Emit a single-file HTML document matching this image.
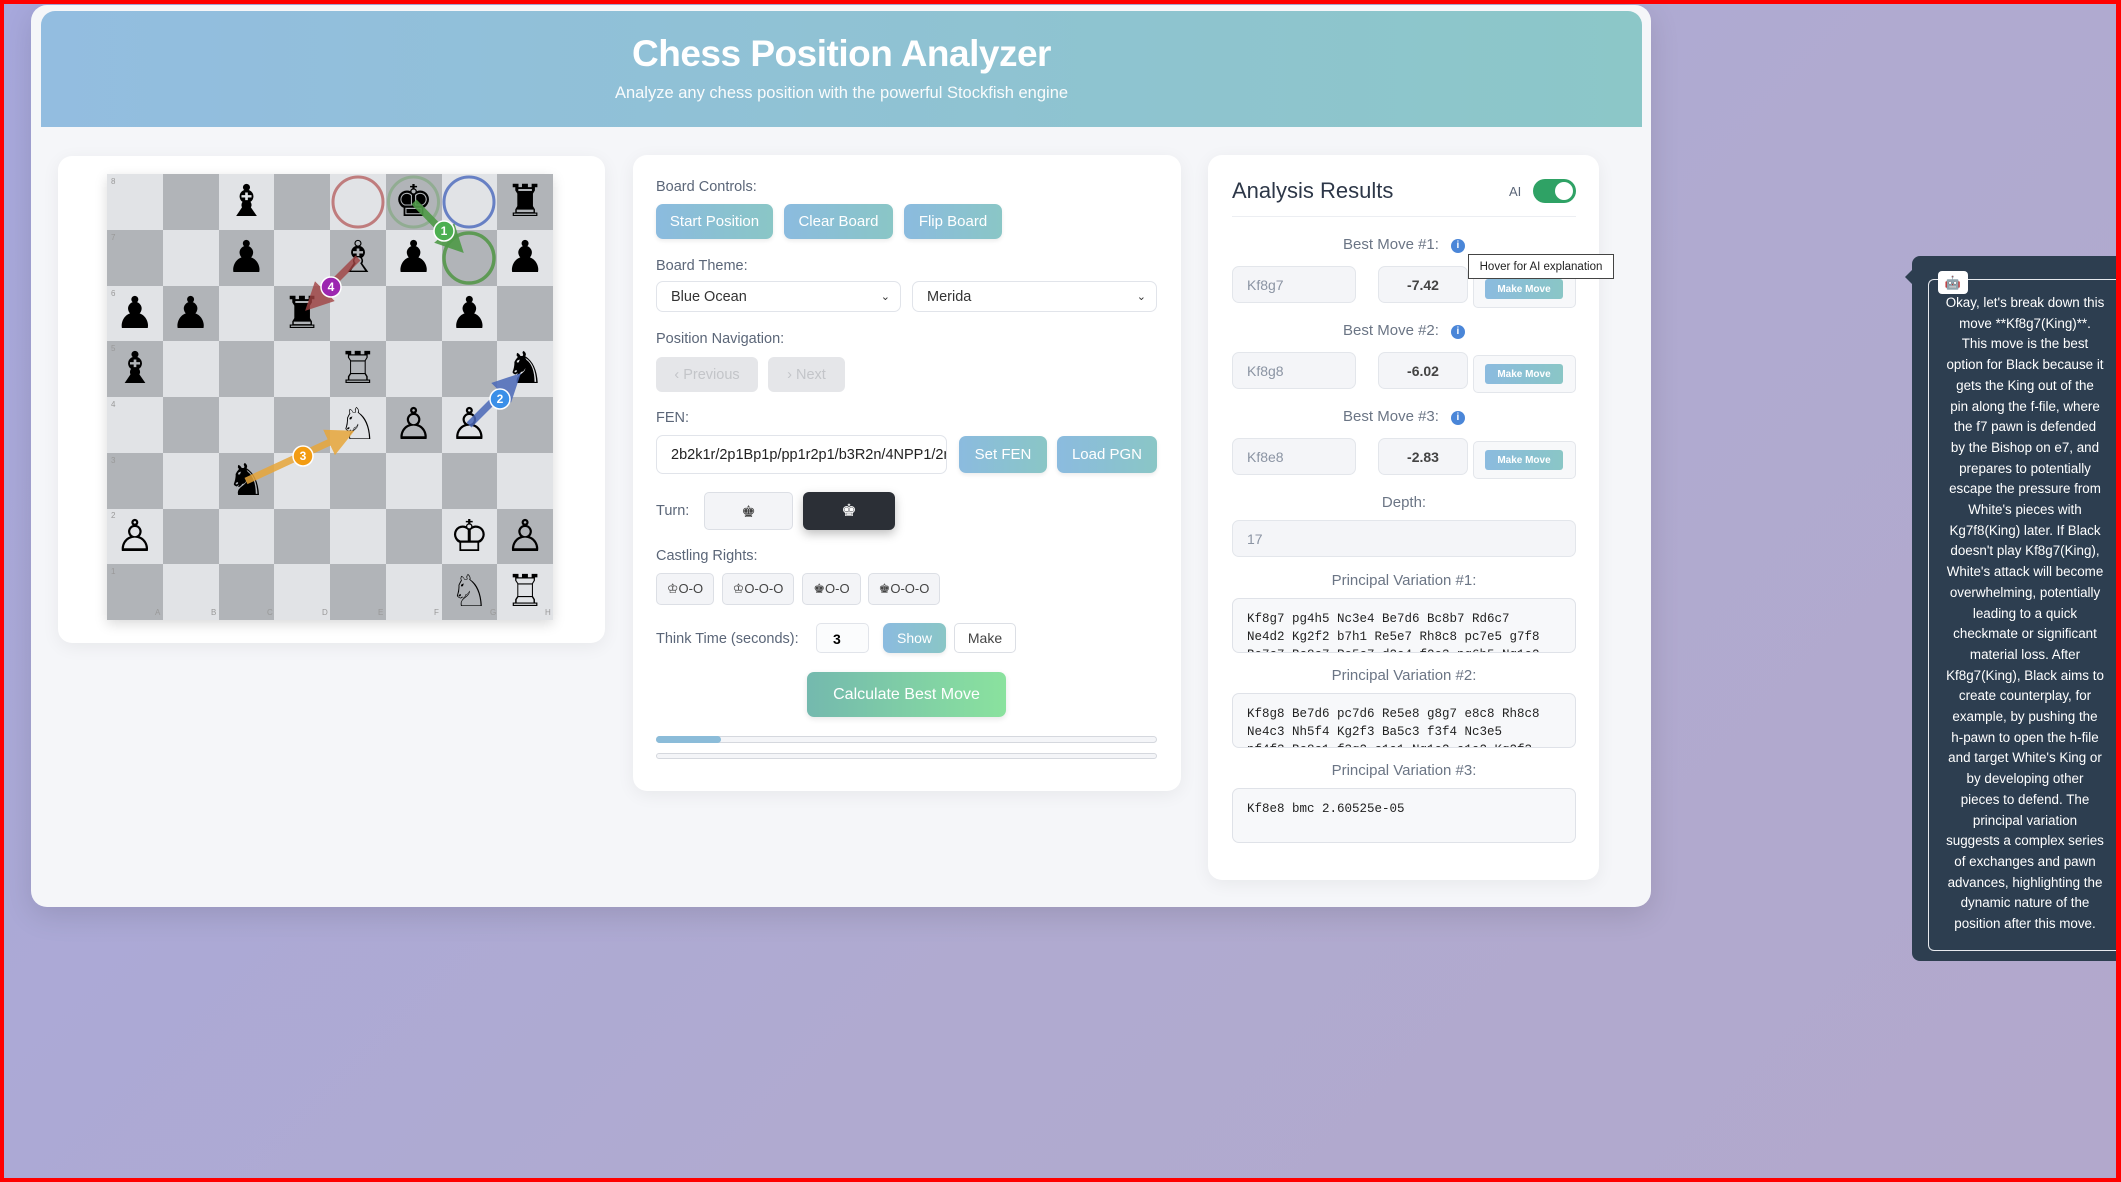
<!DOCTYPE html>
<html><head><meta charset="utf-8">
<style>
*{box-sizing:border-box;margin:0;padding:0}
html,body{width:2121px;height:1182px;overflow:hidden}
body{position:relative;background:linear-gradient(135deg,#a7a8dc 0%,#b0aad0 60%,#b2a8cc 100%);font-family:"Liberation Sans",sans-serif}
.frame{position:absolute;left:0;top:0;width:2121px;height:1182px;border:4px solid #f00;border-right-width:5px;pointer-events:none;z-index:10}
.a{position:absolute}
.main{left:31px;top:5px;width:1620px;height:902px;background:#f5f6f9;border-radius:16px;box-shadow:0 8px 30px rgba(0,0,0,.12)}
.hdr{left:41px;top:11px;width:1601px;height:116px;background:linear-gradient(90deg,#93bde0,#8cc7c8);border-radius:14px 14px 0 0;color:#fff;text-align:center}
.card{background:#fff;border-radius:14px;box-shadow:0 4px 18px rgba(0,0,0,.06)}
.lbl{color:#5b6678;font-size:14.5px}
.btn{background:linear-gradient(90deg,#8bbbdf,#8ac6c6);color:#fff;border-radius:7px;font-size:15px;display:flex;align-items:center;justify-content:center;box-shadow:0 2px 4px rgba(0,0,0,.08)}
.inp{border:1px solid #e1e4ea;border-radius:7px;background:#fff;font-size:14.5px;display:flex;align-items:center;padding-left:14px;color:#333}
.gb{background:#f3f4f7;border:1px solid #dcdfe5;border-radius:5px;display:flex;align-items:center;justify-content:center;font-size:13px;color:#444}
.sq{position:absolute;width:55.75px;height:55.75px}
.pc{position:absolute;width:55.75px;height:55.75px;font-family:"DejaVu Sans",sans-serif;font-size:44px;line-height:55px;text-align:center;color:#000}
.rk{position:absolute;font-size:8px;color:#999}
.ro{background:#f4f5f8;border:1px solid #e3e6eb;border-radius:7px;font-size:14px;color:#8b94a3;display:flex;align-items:center;padding-left:14px}
.sc{background:#f4f5f8;border:1px solid #e3e6eb;border-radius:7px;font-size:14px;color:#444;font-weight:bold;display:flex;align-items:center;justify-content:center}
.mm{border:1px solid #e3e6eb;border-radius:5px;background:#f7f8fa}
.mmb{background:linear-gradient(90deg,#8bbbdf,#8ac6c6);color:#fff;font-size:10px;font-weight:bold;display:flex;align-items:center;justify-content:center;border-radius:3px}
.h{color:#6b7585;font-size:15px;text-align:center}
.info{display:inline-block;width:14px;height:14px;border-radius:50%;background:#4a86d8;color:#fff;font-size:10px;line-height:14px;text-align:center;font-weight:bold;vertical-align:1px;margin-left:12px}
.ta{background:#f7f8fa;border:1px solid #dfe2e8;border-radius:7px;font-family:"Liberation Mono",monospace;font-size:12.5px;color:#222;padding:11px 14px;line-height:18px;overflow:hidden;white-space:pre}
</style></head><body>
<div class="frame"></div>
<div class="a main"></div>
<div class="a hdr">
 <div style="font-size:37px;font-weight:bold;margin-top:22px;letter-spacing:-0.5px">Chess Position Analyzer</div>
 <div style="font-size:16.5px;margin-top:9px;opacity:.95">Analyze any chess position with the powerful Stockfish engine</div>
</div>

<!-- board card -->
<div class="a card" style="left:58px;top:156px;width:547px;height:487px"></div>
<div class="a" id="board" style="left:107px;top:174px;width:446px;height:446px;box-shadow:0 4px 12px rgba(0,0,0,.15)">
<div class="sq" style="left:0px;top:0px;background:#e1e3e6"></div><div class="sq" style="left:55.75px;top:0px;background:#b1b4b8"></div><div class="sq" style="left:111.5px;top:0px;background:#e1e3e6"></div><div class="sq" style="left:167.25px;top:0px;background:#b1b4b8"></div><div class="sq" style="left:223px;top:0px;background:#e1e3e6"></div><div class="sq" style="left:278.75px;top:0px;background:#b1b4b8"></div><div class="sq" style="left:334.5px;top:0px;background:#e1e3e6"></div><div class="sq" style="left:390.25px;top:0px;background:#b1b4b8"></div>
<div class="sq" style="left:0px;top:55.75px;background:#b1b4b8"></div><div class="sq" style="left:55.75px;top:55.75px;background:#e1e3e6"></div><div class="sq" style="left:111.5px;top:55.75px;background:#b1b4b8"></div><div class="sq" style="left:167.25px;top:55.75px;background:#e1e3e6"></div><div class="sq" style="left:223px;top:55.75px;background:#b1b4b8"></div><div class="sq" style="left:278.75px;top:55.75px;background:#e1e3e6"></div><div class="sq" style="left:334.5px;top:55.75px;background:#b1b4b8"></div><div class="sq" style="left:390.25px;top:55.75px;background:#e1e3e6"></div>
<div class="sq" style="left:0px;top:111.5px;background:#e1e3e6"></div><div class="sq" style="left:55.75px;top:111.5px;background:#b1b4b8"></div><div class="sq" style="left:111.5px;top:111.5px;background:#e1e3e6"></div><div class="sq" style="left:167.25px;top:111.5px;background:#b1b4b8"></div><div class="sq" style="left:223px;top:111.5px;background:#e1e3e6"></div><div class="sq" style="left:278.75px;top:111.5px;background:#b1b4b8"></div><div class="sq" style="left:334.5px;top:111.5px;background:#e1e3e6"></div><div class="sq" style="left:390.25px;top:111.5px;background:#b1b4b8"></div>
<div class="sq" style="left:0px;top:167.25px;background:#b1b4b8"></div><div class="sq" style="left:55.75px;top:167.25px;background:#e1e3e6"></div><div class="sq" style="left:111.5px;top:167.25px;background:#b1b4b8"></div><div class="sq" style="left:167.25px;top:167.25px;background:#e1e3e6"></div><div class="sq" style="left:223px;top:167.25px;background:#b1b4b8"></div><div class="sq" style="left:278.75px;top:167.25px;background:#e1e3e6"></div><div class="sq" style="left:334.5px;top:167.25px;background:#b1b4b8"></div><div class="sq" style="left:390.25px;top:167.25px;background:#e1e3e6"></div>
<div class="sq" style="left:0px;top:223px;background:#e1e3e6"></div><div class="sq" style="left:55.75px;top:223px;background:#b1b4b8"></div><div class="sq" style="left:111.5px;top:223px;background:#e1e3e6"></div><div class="sq" style="left:167.25px;top:223px;background:#b1b4b8"></div><div class="sq" style="left:223px;top:223px;background:#e1e3e6"></div><div class="sq" style="left:278.75px;top:223px;background:#b1b4b8"></div><div class="sq" style="left:334.5px;top:223px;background:#e1e3e6"></div><div class="sq" style="left:390.25px;top:223px;background:#b1b4b8"></div>
<div class="sq" style="left:0px;top:278.75px;background:#b1b4b8"></div><div class="sq" style="left:55.75px;top:278.75px;background:#e1e3e6"></div><div class="sq" style="left:111.5px;top:278.75px;background:#b1b4b8"></div><div class="sq" style="left:167.25px;top:278.75px;background:#e1e3e6"></div><div class="sq" style="left:223px;top:278.75px;background:#b1b4b8"></div><div class="sq" style="left:278.75px;top:278.75px;background:#e1e3e6"></div><div class="sq" style="left:334.5px;top:278.75px;background:#b1b4b8"></div><div class="sq" style="left:390.25px;top:278.75px;background:#e1e3e6"></div>
<div class="sq" style="left:0px;top:334.5px;background:#e1e3e6"></div><div class="sq" style="left:55.75px;top:334.5px;background:#b1b4b8"></div><div class="sq" style="left:111.5px;top:334.5px;background:#e1e3e6"></div><div class="sq" style="left:167.25px;top:334.5px;background:#b1b4b8"></div><div class="sq" style="left:223px;top:334.5px;background:#e1e3e6"></div><div class="sq" style="left:278.75px;top:334.5px;background:#b1b4b8"></div><div class="sq" style="left:334.5px;top:334.5px;background:#e1e3e6"></div><div class="sq" style="left:390.25px;top:334.5px;background:#b1b4b8"></div>
<div class="sq" style="left:0px;top:390.25px;background:#b1b4b8"></div><div class="sq" style="left:55.75px;top:390.25px;background:#e1e3e6"></div><div class="sq" style="left:111.5px;top:390.25px;background:#b1b4b8"></div><div class="sq" style="left:167.25px;top:390.25px;background:#e1e3e6"></div><div class="sq" style="left:223px;top:390.25px;background:#b1b4b8"></div><div class="sq" style="left:278.75px;top:390.25px;background:#e1e3e6"></div><div class="sq" style="left:334.5px;top:390.25px;background:#b1b4b8"></div><div class="sq" style="left:390.25px;top:390.25px;background:#e1e3e6"></div>
<div class="rk" style="left:4px;top:3px">8</div><div class="rk" style="left:4px;top:59px">7</div><div class="rk" style="left:4px;top:115px">6</div><div class="rk" style="left:4px;top:170px">5</div><div class="rk" style="left:4px;top:226px">4</div><div class="rk" style="left:4px;top:282px">3</div><div class="rk" style="left:4px;top:337px">2</div><div class="rk" style="left:4px;top:393px">1</div>
<div class="rk" style="left:48px;top:434px">A</div><div class="rk" style="left:104px;top:434px">B</div><div class="rk" style="left:160px;top:434px">C</div><div class="rk" style="left:215px;top:434px">D</div><div class="rk" style="left:271px;top:434px">E</div><div class="rk" style="left:327px;top:434px">F</div><div class="rk" style="left:383px;top:434px">G</div><div class="rk" style="left:438px;top:434px">H</div>
<svg class="a" style="left:0;top:0" width="446" height="446">
<circle cx="251" cy="28" r="25" fill="none" stroke="#b96a6a" stroke-width="3" opacity=".85"/>
<circle cx="306.5" cy="28" r="25" fill="none" stroke="#8aaa88" stroke-width="3" opacity=".8"/>
<circle cx="362" cy="28" r="25" fill="none" stroke="#5a74c0" stroke-width="3" opacity=".9"/>
<circle cx="362" cy="84" r="25" fill="none" stroke="#5e9a55" stroke-width="3.5"/>
</svg>
<div class="pc" style="left:111.5px;top:0">♝</div>
<div class="pc" style="left:278.75px;top:0">♚</div>
<div class="pc" style="left:390.25px;top:0">♜</div>
<div class="pc" style="left:111.5px;top:55.75px">♟</div>
<div class="pc" style="left:223px;top:55.75px">♗</div>
<div class="pc" style="left:278.75px;top:55.75px">♟</div>
<div class="pc" style="left:390.25px;top:55.75px">♟</div>
<div class="pc" style="left:0;top:111.5px">♟</div>
<div class="pc" style="left:55.75px;top:111.5px">♟</div>
<div class="pc" style="left:167.25px;top:111.5px">♜</div>
<div class="pc" style="left:334.5px;top:111.5px">♟</div>
<div class="pc" style="left:0;top:167.25px">♝</div>
<div class="pc" style="left:223px;top:167.25px">♖</div>
<div class="pc" style="left:390.25px;top:167.25px">♞</div>
<div class="pc" style="left:223px;top:223px">♘</div>
<div class="pc" style="left:278.75px;top:223px">♙</div>
<div class="pc" style="left:334.5px;top:223px">♙</div>
<div class="pc" style="left:111.5px;top:278.75px">♞</div>
<div class="pc" style="left:0;top:334.5px">♙</div>
<div class="pc" style="left:334.5px;top:334.5px">♔</div>
<div class="pc" style="left:390.25px;top:334.5px">♙</div>
<div class="pc" style="left:334.5px;top:390.25px">♘</div>
<div class="pc" style="left:390.25px;top:390.25px">♖</div>
<svg class="a" style="left:0;top:0" width="446" height="446">
<defs>
<marker id="mg" markerWidth="4" markerHeight="4" refX="2.2" refY="2" orient="auto"><path d="M0,0L4,2L0,4z" fill="#4f9a48"/></marker>
<marker id="mb" markerWidth="4" markerHeight="4" refX="2.2" refY="2" orient="auto"><path d="M0,0L4,2L0,4z" fill="#4a68b8"/></marker>
<marker id="mo" markerWidth="4" markerHeight="4" refX="2.2" refY="2" orient="auto"><path d="M0,0L4,2L0,4z" fill="#e8a63a"/></marker>
<marker id="mr" markerWidth="4" markerHeight="4" refX="2.2" refY="2" orient="auto"><path d="M0,0L4,2L0,4z" fill="#a24343"/></marker>
</defs>
<line x1="307" y1="28" x2="348" y2="70" stroke="#4f9a48" stroke-width="7" opacity=".9" marker-end="url(#mg)"/>
<line x1="362" y1="251" x2="405" y2="208" stroke="#4a68b8" stroke-width="7" opacity=".85" marker-end="url(#mb)"/>
<line x1="139" y1="307" x2="236" y2="262" stroke="#e8a63a" stroke-width="7" opacity=".85" marker-end="url(#mo)"/>
<line x1="251" y1="84" x2="207" y2="128" stroke="#a24343" stroke-width="7" opacity=".8" marker-end="url(#mr)"/>
<g font-family="Liberation Sans" font-size="12" font-weight="bold" fill="#fff" text-anchor="middle">
<circle cx="337" cy="57" r="10" fill="#4caf50" stroke="#fff" stroke-width="1.5"/><text x="337" y="61">1</text>
<circle cx="393" cy="225" r="10" fill="#3b8fe8" stroke="#fff" stroke-width="1.5"/><text x="393" y="229">2</text>
<circle cx="196" cy="282" r="10" fill="#f39c12" stroke="#fff" stroke-width="1.5"/><text x="196" y="286">3</text>
<circle cx="224" cy="113" r="10" fill="#9c27b0" stroke="#fff" stroke-width="1.5"/><text x="224" y="117">4</text>
</g>
</svg>
</div>

<!-- controls card -->
<div class="a card" style="left:633px;top:155px;width:548px;height:636px"></div>
<div class="a lbl" style="left:656px;top:179px">Board Controls:</div>
<div class="a btn" style="left:656px;top:204px;width:117px;height:35px">Start Position</div>
<div class="a btn" style="left:784px;top:204px;width:109px;height:35px">Clear Board</div>
<div class="a btn" style="left:904px;top:204px;width:98px;height:35px">Flip Board</div>
<div class="a lbl" style="left:656px;top:258px">Board Theme:</div>
<div class="a inp" style="left:656px;top:281px;width:245px;height:31px">Blue Ocean<span style="position:absolute;right:10px;font-size:11px">&#8964;</span></div>
<div class="a inp" style="left:912px;top:281px;width:245px;height:31px">Merida<span style="position:absolute;right:10px;font-size:11px">&#8964;</span></div>
<div class="a lbl" style="left:656px;top:331px">Position Navigation:</div>
<div class="a" style="left:656px;top:357px;width:102px;height:35px;background:#e5e6e9;border-radius:6px;color:#c3c5c9;font-size:14.5px;display:flex;align-items:center;justify-content:center">&#8249; Previous</div>
<div class="a" style="left:768px;top:357px;width:77px;height:35px;background:#e5e6e9;border-radius:6px;color:#c3c5c9;font-size:14.5px;display:flex;align-items:center;justify-content:center">&#8250; Next</div>
<div class="a lbl" style="left:656px;top:410px">FEN:</div>
<div class="a inp" style="left:656px;top:435px;width:291px;height:39px;font-size:14.5px;color:#222;overflow:hidden;white-space:nowrap">2b2k1r/2p1Bp1p/pp1r2p1/b3R2n/4NPP1/2n</div>
<div class="a btn" style="left:959px;top:436px;width:88px;height:37px">Set FEN</div>
<div class="a btn" style="left:1057px;top:436px;width:100px;height:37px">Load PGN</div>
<div class="a lbl" style="left:656px;top:503px">Turn:</div>
<div class="a gb" style="left:704px;top:492px;width:89px;height:38px;font-size:16px;font-family:'DejaVu Sans'">♚</div>
<div class="a" style="left:803px;top:492px;width:92px;height:38px;background:#2b2f36;border-radius:6px;box-shadow:0 4px 10px rgba(0,0,0,.25);color:#fff;font-size:17px;display:flex;align-items:center;justify-content:center;font-family:'DejaVu Sans'">♚</div>
<div class="a lbl" style="left:656px;top:548px">Castling Rights:</div>
<div class="a gb" style="left:656px;top:573px;width:58px;height:32px">♔O-O</div>
<div class="a gb" style="left:722px;top:573px;width:72px;height:32px">♔O-O-O</div>
<div class="a gb" style="left:802px;top:573px;width:59px;height:32px">♚O-O</div>
<div class="a gb" style="left:868px;top:573px;width:72px;height:32px">♚O-O-O</div>
<div class="a lbl" style="left:656px;top:631px">Think Time (seconds):</div>
<div class="a" style="left:816px;top:623px;width:53px;height:30px;border:1px solid #e1e4ea;border-radius:5px;background:#fbfcfd;font-size:14px;font-weight:bold;padding:7px 0 0 16px">3</div>
<div class="a btn" style="left:883px;top:623px;width:63px;height:30px;font-size:14px">Show</div>
<div class="a" style="left:954px;top:623px;width:62px;height:30px;border:1px solid #dcdfe5;border-radius:5px;background:#fff;font-size:14px;color:#444;display:flex;align-items:center;justify-content:center">Make</div>
<div class="a" style="left:807px;top:672px;width:199px;height:45px;border-radius:7px;background:linear-gradient(90deg,#74b9ae,#8ae29e);color:#fff;font-size:16px;display:flex;align-items:center;justify-content:center;box-shadow:0 2px 6px rgba(0,0,0,.1)">Calculate Best Move</div>
<div class="a" style="left:656px;top:736px;width:501px;height:7px;border:1px solid #d5d8de;border-radius:4px;background:#f4f5f8"></div>
<div class="a" style="left:656px;top:736px;width:65px;height:7px;border-radius:4px;background:#8bbcd9"></div>
<div class="a" style="left:656px;top:753px;width:501px;height:6px;border:1px solid #d5d8de;border-radius:4px;background:#f4f5f8"></div>

<!-- analysis card -->
<div class="a card" style="left:1208px;top:155px;width:391px;height:725px"></div>
<div class="a" style="left:1232px;top:178px;font-size:22px;color:#2d3748">Analysis Results</div>
<div class="a" style="left:1509px;top:184px;font-size:13px;color:#5b6678">AI</div>
<div class="a" style="left:1533px;top:179px;width:43px;height:24px;border-radius:12px;background:#2fa265"><div class="a" style="left:22px;top:3px;width:18px;height:18px;border-radius:50%;background:#fff"></div></div>
<div class="a" style="left:1232px;top:216px;width:344px;height:1px;background:#eceef2"></div>

<div class="a h" style="left:1232px;top:236px;width:344px">Best Move #1:<span class="info">i</span></div>
<div class="a ro" style="left:1232px;top:266px;width:124px;height:37px">Kf8g7</div>
<div class="a sc" style="left:1378px;top:266px;width:90px;height:37px">-7.42</div>
<div class="a mm" style="left:1473px;top:266px;width:103px;height:42px"></div>
<div class="a mmb" style="left:1485px;top:279px;width:78px;height:20px">Make Move</div>

<div class="a h" style="left:1232px;top:322px;width:344px">Best Move #2:<span class="info">i</span></div>
<div class="a ro" style="left:1232px;top:352px;width:124px;height:37px">Kf8g8</div>
<div class="a sc" style="left:1378px;top:352px;width:90px;height:37px">-6.02</div>
<div class="a mm" style="left:1473px;top:355px;width:103px;height:38px"></div>
<div class="a mmb" style="left:1485px;top:364px;width:78px;height:20px">Make Move</div>

<div class="a h" style="left:1232px;top:408px;width:344px">Best Move #3:<span class="info">i</span></div>
<div class="a ro" style="left:1232px;top:438px;width:124px;height:37px">Kf8e8</div>
<div class="a sc" style="left:1378px;top:438px;width:90px;height:37px">-2.83</div>
<div class="a mm" style="left:1473px;top:441px;width:103px;height:38px"></div>
<div class="a mmb" style="left:1485px;top:450px;width:78px;height:20px">Make Move</div>

<div class="a" style="left:1468px;top:254px;width:146px;height:25px;background:#fff;border:1px solid #444;font-size:11.5px;color:#222;display:flex;align-items:center;justify-content:center">Hover for AI explanation</div>

<div class="a h" style="left:1232px;top:494px;width:344px">Depth:</div>
<div class="a ro" style="left:1232px;top:520px;width:344px;height:37px">17</div>

<div class="a h" style="left:1232px;top:572px;width:344px">Principal Variation #1:</div>
<div class="a ta" style="left:1232px;top:598px;width:344px;height:55px">Kf8g7 pg4h5 Nc3e4 Be7d6 Bc8b7 Rd6c7
Ne4d2 Kg2f2 b7h1 Re5e7 Rh8c8 pc7e5 g7f8
Be7c7 Bc8c7 Re5c7 d2e4 f2e3 pg6h5 Ng1e2</div>
<div class="a h" style="left:1232px;top:667px;width:344px">Principal Variation #2:</div>
<div class="a ta" style="left:1232px;top:693px;width:344px;height:55px">Kf8g8 Be7d6 pc7d6 Re5e8 g8g7 e8c8 Rh8c8
Ne4c3 Nh5f4 Kg2f3 Ba5c3 f3f4 Nc3e5
pf4f3 Bc8c1 f3g2 c1a1 Ng1e2 a1a2 Kg2f3</div>
<div class="a h" style="left:1232px;top:762px;width:344px">Principal Variation #3:</div>
<div class="a ta" style="left:1232px;top:788px;width:344px;height:55px">Kf8e8 bmc 2.60525e-05</div>

<!-- AI tooltip panel -->
<div class="a" style="left:1912px;top:256px;width:204px;height:705px;background:#2d3e50;border-radius:8px 0 0 8px"></div>
<div class="a" style="left:1905px;top:270px;width:0;height:0;border-top:7px solid transparent;border-bottom:7px solid transparent;border-right:7px solid #2d3e50"></div>
<div class="a" style="left:1928px;top:279px;width:190px;height:672px;border:1px solid #e6e9ee;border-right:none;border-radius:6px 0 0 6px"></div>
<div class="a" style="left:1938px;top:271px;width:30px;height:23px;background:#fff;border-radius:4px;text-align:center;font-size:13px;line-height:23px">🤖</div>
<div class="a" style="left:1932px;top:293px;width:186px;text-align:center;color:#fff;font-size:13.4px;line-height:20.7px">Okay, let's break down this<br>move **Kf8g7(King)**.<br>This move is the best<br>option for Black because it<br>gets the King out of the<br>pin along the f-file, where<br>the f7 pawn is defended<br>by the Bishop on e7, and<br>prepares to potentially<br>escape the pressure from<br>White's pieces with<br>Kg7f8(King) later. If Black<br>doesn't play Kf8g7(King),<br>White's attack will become<br>overwhelming, potentially<br>leading to a quick<br>checkmate or significant<br>material loss. After<br>Kf8g7(King), Black aims to<br>create counterplay, for<br>example, by pushing the<br>h-pawn to open the h-file<br>and target White's King or<br>by developing other<br>pieces to defend. The<br>principal variation<br>suggests a complex series<br>of exchanges and pawn<br>advances, highlighting the<br>dynamic nature of the<br>position after this move.</div>
</body></html>
